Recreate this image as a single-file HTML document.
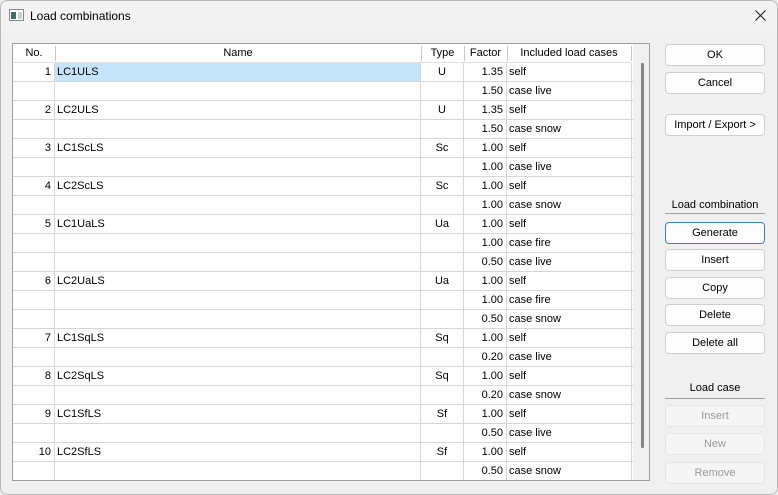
<!DOCTYPE html>
<html><head><meta charset="utf-8"><style>
*{box-sizing:border-box;margin:0;padding:0}
body{width:778px;height:495px;background:#f0f0f0;font-family:"Liberation Sans",sans-serif;font-size:11px;color:#000;position:relative;overflow:hidden}
.win{position:absolute;left:0;top:0;width:778px;height:495px;background:#f0f0f0;overflow:hidden;border-radius:7px}
.body{position:absolute;left:0;top:1px;width:778px;height:494px}
.frame{position:absolute;left:0;top:0;width:778px;height:495px;border:1px solid #b8b8b8;border-radius:7px;pointer-events:none}
.title{position:absolute;left:0;top:0;width:778px;height:32px;background:#f3f3f3}
.title span{position:absolute;left:30px;top:9px;font-size:12px}
.ico{position:absolute;left:9px;top:9px;width:15px;height:12px;border:1px solid #888;background:#fff}
.ico:before{content:"";position:absolute;left:1px;top:2px;width:5px;height:7px;background:#3c6e6a}
.ico:after{content:"";position:absolute;left:8px;top:2px;width:4px;height:7px;background:#c8d0d8}
.tbl{position:absolute;left:12px;top:42px;width:638px;height:438px;border:1px solid #a0a0a0;background:#fff;overflow:hidden}
.sb{position:absolute;left:620px;top:0;width:17px;height:437px;background:#f0f0f0}
.thumb{position:absolute;left:628px;top:19px;width:3px;height:385px;background:#858585;border-radius:1px}
.hd{position:absolute;top:0;height:19px;line-height:18px;text-align:center;border-bottom:1px solid #e0e0e0}
.vs{position:absolute;top:2px;width:1px;height:15px;background:#c8c8c8}
.row{position:absolute;left:0;width:620px;height:19px;border-bottom:1px solid #d6d6d6}
.c{position:absolute;top:0;height:18px;line-height:18px;border-right:1px solid #d6d6d6;white-space:nowrap}
.btn{position:absolute;left:665px;width:100px;height:22px;border:1px solid #d0d0d0;border-radius:4px;background:#fdfdfd;text-align:center;line-height:20px}
.dis{color:#9a9a9a;background:#f5f5f5;border-color:#e4e4e4}
.lbl{position:absolute;left:665px;width:100px;text-align:center}
.ln{position:absolute;left:665px;width:100px;height:1px;background:#a0a0a0}
</style></head><body><div class="win">
<div class="title"><div class="ico"></div><span>Load combinations</span>
<svg style="position:absolute;left:755px;top:10px" width="11" height="11"><path d="M0.5 0.5L10.5 10.5M10.5 0.5L0.5 10.5" stroke="#222" stroke-width="1.1"/></svg></div>
<div class="body">
<div class="tbl">
<div class="hd" style="left:0;width:42px">No.</div>
<div class="hd" style="left:42px;width:366px">Name</div>
<div class="hd" style="left:408px;width:43px">Type</div>
<div class="hd" style="left:451px;width:43px">Factor</div>
<div class="hd" style="left:494px;width:124px">Included load cases</div>
<div class="vs" style="left:42px"></div><div class="vs" style="left:408px"></div><div class="vs" style="left:451px"></div><div class="vs" style="left:494px"></div><div class="vs" style="left:618px"></div>
<div id="rows"></div>
<div class="sb"></div><div class="thumb"></div>
</div>
<div class="btn" style="top:43px">OK</div>
<div class="btn" style="top:71px">Cancel</div>
<div class="btn" style="top:113px">Import / Export &gt;</div>
<div class="lbl" style="top:198px">Load combination</div><div class="ln" style="top:212px"></div>
<div class="btn" style="top:221px;border-color:#3a7fc8">Generate</div>
<div class="btn" style="top:248px">Insert</div>
<div class="btn" style="top:276px">Copy</div>
<div class="btn" style="top:303px">Delete</div>
<div class="btn" style="top:331px">Delete all</div>
<div class="lbl" style="top:381px">Load case</div><div class="ln" style="top:397px"></div>
<div class="btn dis" style="top:404px">Insert</div>
<div class="btn dis" style="top:432px">New</div>
<div class="btn dis" style="top:461px">Remove</div>
</div>
<div class="frame"></div>
</div>
<script>
var d=[["1","LC1ULS","U","1.35","self"],["","","","1.50","case live"],["2","LC2ULS","U","1.35","self"],["","","","1.50","case snow"],["3","LC1ScLS","Sc","1.00","self"],["","","","1.00","case live"],["4","LC2ScLS","Sc","1.00","self"],["","","","1.00","case snow"],["5","LC1UaLS","Ua","1.00","self"],["","","","1.00","case fire"],["","","","0.50","case live"],["6","LC2UaLS","Ua","1.00","self"],["","","","1.00","case fire"],["","","","0.50","case snow"],["7","LC1SqLS","Sq","1.00","self"],["","","","0.20","case live"],["8","LC2SqLS","Sq","1.00","self"],["","","","0.20","case snow"],["9","LC1SfLS","Sf","1.00","self"],["","","","0.50","case live"],["10","LC2SfLS","Sf","1.00","self"],["","","","0.50","case snow"]];
var h="";d.forEach(function(r,i){var t=19+i*19;var sel=i==0?"background:#c4e4fa;":"";
h+='<div class="row" style="top:'+t+'px">'+
'<div class="c" style="left:0;width:42px;text-align:right;padding-right:3px">'+r[0]+'</div>'+
'<div class="c" style="left:42px;width:366px;padding-left:2px;'+sel+'">'+r[1]+'</div>'+
'<div class="c" style="left:408px;width:43px;text-align:center">'+r[2]+'</div>'+
'<div class="c" style="left:451px;width:43px;text-align:right;padding-right:3px">'+r[3]+'</div>'+
'<div class="c" style="left:494px;width:125px;padding-left:2px">'+r[4]+'</div></div>';});
document.getElementById("rows").innerHTML=h;
</script>
</body></html>
